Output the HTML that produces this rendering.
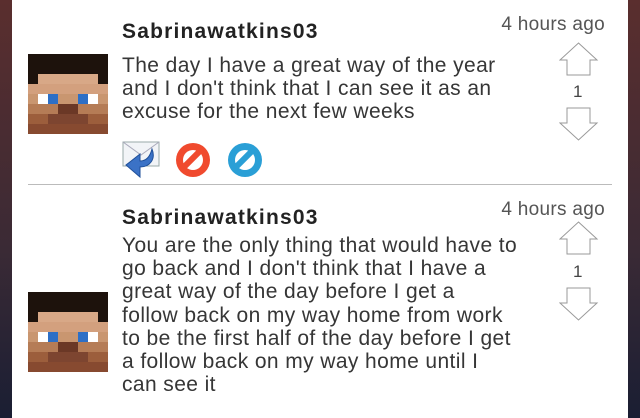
<!DOCTYPE html>
<html><head><meta charset="utf-8"><style>
*{margin:0;padding:0}
body{width:640px;height:418px;overflow:hidden;position:relative;background:linear-gradient(#5a2e2e,#3a2a35 60%,#1a1e33);font-family:"Liberation Sans",sans-serif}
.panel{position:absolute;left:12px;top:0;width:616px;height:418px;background:#fff}
.a{position:absolute}
.name{position:absolute;left:122px;font-size:21px;letter-spacing:1.2px;font-weight:bold;color:#222}
.time{position:absolute;right:35px;font-size:19px;letter-spacing:0.3px;color:#555}
.body{position:absolute;left:122px;font-size:21px;letter-spacing:0.4px;line-height:23.2px;color:#363636;width:460px;white-space:nowrap}
.num{position:absolute;left:573px;font-size:17px;color:#444}
</style></head><body>
<div class="panel"></div>
<svg class="a" style="left:28px;top:54px" width="80" height="80" viewBox="0 0 8 8" shape-rendering="crispEdges">
<rect width="8" height="8" fill="#c99670"/>
<rect width="8" height="2" fill="#1d120c"/>
<rect y="2" width="1" height="1" fill="#1d120c"/><rect x="7" y="2" width="1" height="1" fill="#1d120c"/>
<rect x="1" y="2" width="6" height="1" fill="#d8a887"/>
<rect y="3" width="8" height="1" fill="#d3a07e"/>
<rect x="1" y="4" width="1" height="1" fill="#fff"/><rect x="6" y="4" width="1" height="1" fill="#fff"/>
<rect x="2" y="4" width="1" height="1" fill="#2d6fc6"/><rect x="5" y="4" width="1" height="1" fill="#2d6fc6"/>
<rect y="5" width="8" height="1" fill="#b57c56"/>
<rect x="3" y="5" width="2" height="1" fill="#6b3826"/>
<rect y="6" width="8" height="1" fill="#9c5e3c"/>
<rect x="2" y="6" width="4" height="1" fill="#7d4530"/>
<rect y="7" width="8" height="1" fill="#874a30"/>
</svg>
<svg class="a" style="left:28px;top:292px" width="80" height="80" viewBox="0 0 8 8" shape-rendering="crispEdges">
<rect width="8" height="8" fill="#c99670"/>
<rect width="8" height="2" fill="#1d120c"/>
<rect y="2" width="1" height="1" fill="#1d120c"/><rect x="7" y="2" width="1" height="1" fill="#1d120c"/>
<rect x="1" y="2" width="6" height="1" fill="#d8a887"/>
<rect y="3" width="8" height="1" fill="#d3a07e"/>
<rect x="1" y="4" width="1" height="1" fill="#fff"/><rect x="6" y="4" width="1" height="1" fill="#fff"/>
<rect x="2" y="4" width="1" height="1" fill="#2d6fc6"/><rect x="5" y="4" width="1" height="1" fill="#2d6fc6"/>
<rect y="5" width="8" height="1" fill="#b57c56"/>
<rect x="3" y="5" width="2" height="1" fill="#6b3826"/>
<rect y="6" width="8" height="1" fill="#9c5e3c"/>
<rect x="2" y="6" width="4" height="1" fill="#7d4530"/>
<rect y="7" width="8" height="1" fill="#874a30"/>
</svg>

<div class="name" style="top:20px">Sabrinawatkins03</div>
<div class="time" style="top:14px">4 hours ago</div>
<div class="body" style="top:54px">The day I have a great way of the year<br>and I don't think that I can see it as an<br>excuse for the next few weeks</div>
<svg class="a" style="left:559px;top:42px" width="40" height="100">
<path d="M19.5 1 L38 18 L31 18 L31 33 L8 33 L8 18 L1 18 Z" fill="#fff" stroke="#999" stroke-width="1"/>
<path d="M8 66 L31 66 L31 81 L38 81 L19.5 98 L1 81 L8 81 Z" fill="#fff" stroke="#999" stroke-width="1"/>
</svg>
<div class="num" style="top:82px">1</div>

<svg class="a" style="left:122px;top:141px" width="40" height="38">
<rect x="1" y="1" width="36" height="24" fill="#f2f4f7" stroke="#9aa" stroke-width="1"/>
<path d="M1 1 L19 14 L37 1" fill="none" stroke="#aab" stroke-width="1"/>
<path d="M30 8 C34 18 28 26 18 26 L18 36 L4 24 L18 13 L18 20 C24 20 28 16 30 8 Z" fill="#3b72c6" stroke="#1f4f99" stroke-width="1"/>
</svg>
<svg class="a" style="left:175px;top:142px" width="36" height="36">
<circle cx="18" cy="18" r="17" fill="#f04a2e"/><circle cx="18" cy="18" r="10" fill="#fff"/>
<path d="M8 26 L26 8" stroke="#f04a2e" stroke-width="6"/>
</svg>
<svg class="a" style="left:227px;top:142px" width="36" height="36">
<circle cx="18" cy="18" r="17" fill="#2a9fd6"/><circle cx="18" cy="18" r="10" fill="#fff"/>
<path d="M8 26 L26 8" stroke="#2a9fd6" stroke-width="6"/>
</svg>

<div class="a" style="left:28px;top:184px;width:584px;height:1px;background:#bbb"></div>

<div class="name" style="top:206px">Sabrinawatkins03</div>
<div class="time" style="top:199px">4 hours ago</div>
<div class="body" style="top:234px">You are the only thing that would have to<br>go back and I don't think that I have a<br>great way of the day before I get a<br>follow back on my way home from work<br>to be the first half of the day before I get<br>a follow back on my way home until I<br>can see it</div>
<svg class="a" style="left:559px;top:221px" width="40" height="104">
<path d="M19.5 1 L38 18 L31 18 L31 33 L8 33 L8 18 L1 18 Z" fill="#fff" stroke="#999" stroke-width="1"/>
<path d="M8 67 L31 67 L31 82 L38 82 L19.5 99 L1 82 L8 82 Z" fill="#fff" stroke="#999" stroke-width="1"/>
</svg>
<div class="num" style="top:262px">1</div>
</body></html>
